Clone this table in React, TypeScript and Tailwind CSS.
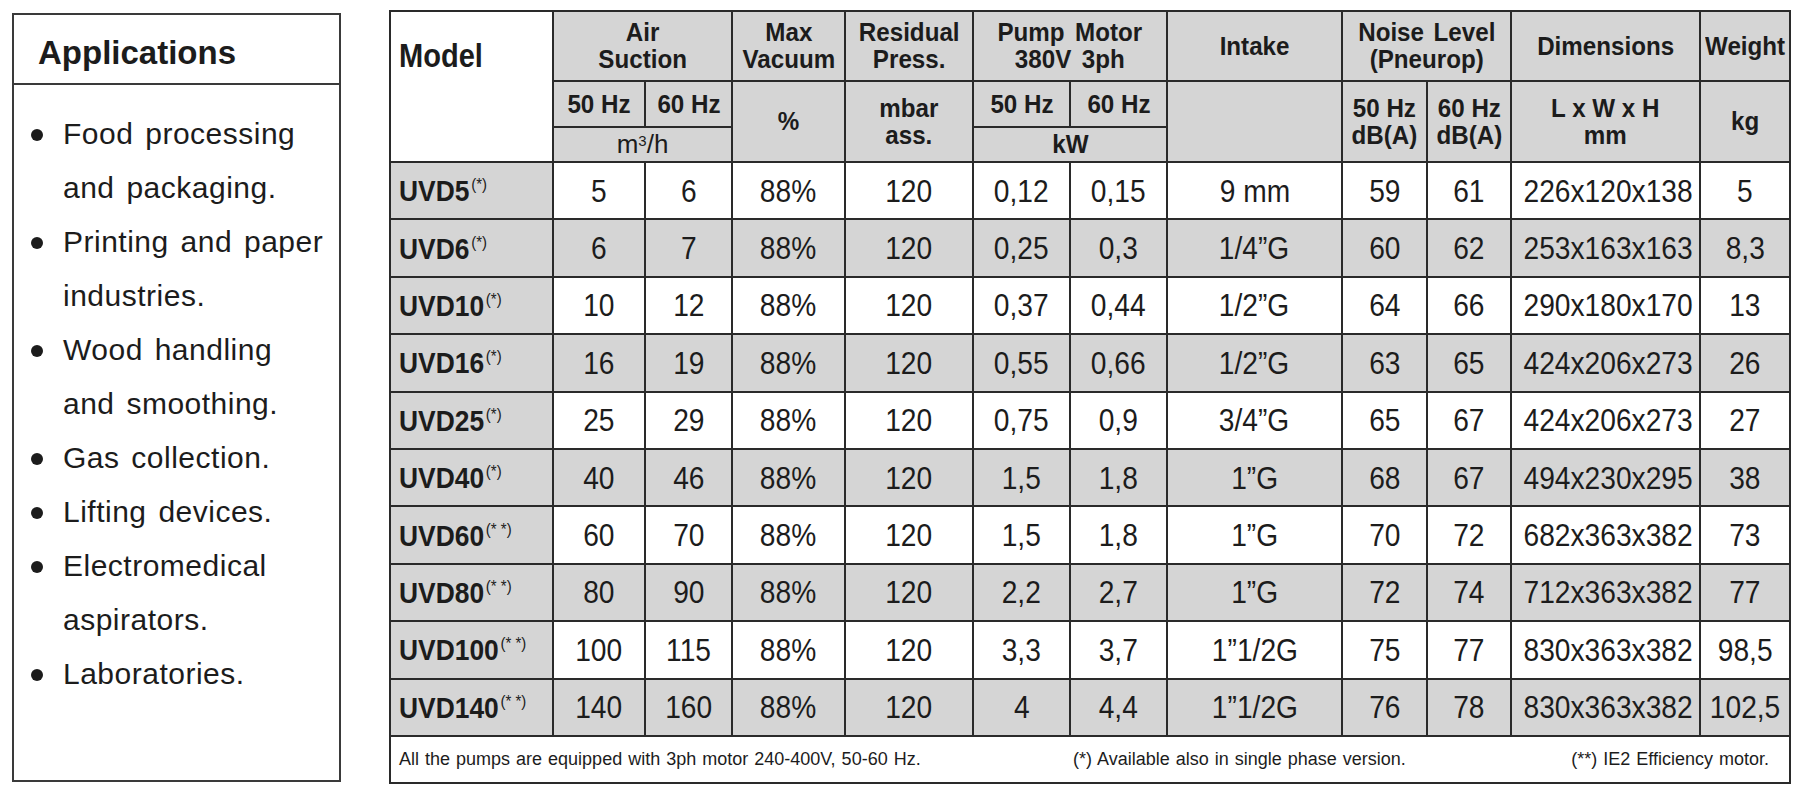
import React from 'react';

const sans = "font-['Liberation_Sans',Arial,sans-serif]";

const rows = [
  ['UVD5', '(*)', '5', '6', '88%', '120', '0,12', '0,15', '9 mm', '59', '61', '226x120x138', '5'],
  ['UVD6', '(*)', '6', '7', '88%', '120', '0,25', '0,3', '1/4”G', '60', '62', '253x163x163', '8,3'],
  ['UVD10', '(*)', '10', '12', '88%', '120', '0,37', '0,44', '1/2”G', '64', '66', '290x180x170', '13'],
  ['UVD16', '(*)', '16', '19', '88%', '120', '0,55', '0,66', '1/2”G', '63', '65', '424x206x273', '26'],
  ['UVD25', '(*)', '25', '29', '88%', '120', '0,75', '0,9', '3/4”G', '65', '67', '424x206x273', '27'],
  ['UVD40', '(*)', '40', '46', '88%', '120', '1,5', '1,8', '1”G', '68', '67', '494x230x295', '38'],
  ['UVD60', '(* *)', '60', '70', '88%', '120', '1,5', '1,8', '1”G', '70', '72', '682x363x382', '73'],
  ['UVD80', '(* *)', '80', '90', '88%', '120', '2,2', '2,7', '1”G', '72', '74', '712x363x382', '77'],
  ['UVD100', '(* *)', '100', '115', '88%', '120', '3,3', '3,7', '1”1/2G', '75', '77', '830x363x382', '98,5'],
  ['UVD140', '(* *)', '140', '160', '88%', '120', '4', '4,4', '1”1/2G', '76', '78', '830x363x382', '102,5'],
];

const applications = [
  ['Food processing', 'and packaging.'],
  ['Printing and paper', 'industries.'],
  ['Wood handling', 'and smoothing.'],
  ['Gas collection.'],
  ['Lifting devices.'],
  ['Electromedical', 'aspirators.'],
  ['Laboratories.'],
];

const cell = 'border-2 border-[#2a2a2a]';
const head = `${cell} bg-[#d5d5d5] text-center font-bold text-[26px] leading-[27px] p-0 whitespace-nowrap`;

// narrow look: the printed sheet uses a condensed Helvetica
function N({ children, left, wide }: { children: React.ReactNode; left?: boolean; wide?: boolean }) {
  return (
    <span className={`inline-block ${wide ? 'scale-x-[0.93]' : 'scale-x-[0.88]'} ${left ? 'origin-left' : 'origin-center'}`}>
      {children}
    </span>
  );
}

export default function App() {
  return (
    <div className={`flex bg-white w-[1800px] h-[792px] text-[#1c1c1c] ${sans}`}>
      <div className="ml-[12px] mt-[13px] w-[329px] h-[769px] border-2 border-[#3a3a3a] flex flex-col">
        <div className="h-[70px] border-b-2 border-[#3a3a3a] flex items-center pl-[24px] pt-[8px] text-[33px] font-bold">
          Applications
        </div>
        <ul className="pt-[22px] text-[30px] leading-[54px] tracking-[0.5px] [word-spacing:3px]">
          {applications.map((item, i) => (
            <li key={i} className="flex">
              <span className="ml-[17px] mt-[22px] w-[12px] h-[12px] rounded-full bg-[#1c1c1c] shrink-0" />
              <span className="ml-[20px]">
                {item.map((line, j) => (
                  <div key={j}>{line}</div>
                ))}
              </span>
            </li>
          ))}
        </ul>
      </div>

      <table className="ml-[48px] mt-[10px] w-[1400px] table-fixed border-collapse self-start">
        <colgroup>
          <col className="w-[163px]" />
          <col className="w-[92px]" />
          <col className="w-[87px]" />
          <col className="w-[113px]" />
          <col className="w-[128px]" />
          <col className="w-[97px]" />
          <col className="w-[97px]" />
          <col className="w-[175px]" />
          <col className="w-[85px]" />
          <col className="w-[84px]" />
          <col className="w-[189px]" />
          <col className="w-[90px]" />
        </colgroup>
        <thead>
          <tr className="h-[70px]">
            <th rowSpan={3} className={`${cell} bg-white align-top text-left pl-[8px] pt-[24px] font-bold text-[33px] leading-[40px]`}>
              <N left>Model</N>
            </th>
            <th colSpan={2} className={head}><N wide>Air<br />Suction</N></th>
            <th className={head}><N wide>Max<br />Vacuum</N></th>
            <th className={head}><N wide>Residual<br />Press.</N></th>
            <th colSpan={2} className={`${head} [word-spacing:4px]`}><N wide>Pump Motor<br />380V 3ph</N></th>
            <th className={head}><N wide>Intake</N></th>
            <th colSpan={2} className={`${head} [word-spacing:3px]`}><N wide>Noise Level<br />(Pneurop)</N></th>
            <th className={head}><N wide>Dimensions</N></th>
            <th className={head}><N wide>Weight</N></th>
          </tr>
          <tr className="h-[46px]">
            <th className={head}><N wide>50 Hz</N></th>
            <th className={head}><N wide>60 Hz</N></th>
            <th rowSpan={2} className={head}><N wide>%</N></th>
            <th rowSpan={2} className={head}><N wide>mbar<br />ass.</N></th>
            <th className={head}><N wide>50 Hz</N></th>
            <th className={head}><N wide>60 Hz</N></th>
            <th rowSpan={2} className={head}></th>
            <th rowSpan={2} className={head}><N wide>50 Hz<br />dB(A)</N></th>
            <th rowSpan={2} className={head}><N wide>60 Hz<br />dB(A)</N></th>
            <th rowSpan={2} className={head}><N wide>L x W x H<br />mm</N></th>
            <th rowSpan={2} className={head}><N wide>kg</N></th>
          </tr>
          <tr className="h-[35px]">
            <th colSpan={2} className={`${head} font-normal text-[24px]`}>
              m<sup className="text-[15px]">3</sup>/h
            </th>
            <th colSpan={2} className={head}><N wide>kW</N></th>
          </tr>
        </thead>
        <tbody>
          {rows.map((r, i) => {
            const shade = i % 2 === 1 ? 'bg-[#d5d5d5]' : 'bg-white';
            return (
              <tr key={r[0]} className="h-[57.4px]">
                <td className={`${cell} bg-[#d5d5d5] pl-[8px] p-0 text-[30px] font-bold whitespace-nowrap`}>
                  <N left>
                    {r[0]}
                    <span className="relative -top-[11px] ml-[2px] text-[17px] font-normal">{r[1]}</span>
                  </N>
                </td>
                {r.slice(2).map((v, j) => (
                  <td key={j} className={`${cell} ${shade} p-0 text-center text-[32px] whitespace-nowrap`}>
                    <N>{v}</N>
                  </td>
                ))}
              </tr>
            );
          })}
          <tr className="h-[47px]">
            <td colSpan={12} className={`${cell} p-0`}>
              <div className="flex items-center pr-[20px] text-[18px] [word-spacing:1px]">
                <span className="w-[682px] pl-[8px] shrink-0">
                  All the pumps are equipped with 3ph motor 240-400V, 50-60 Hz.
                </span>
                <span>(*) Available also in single phase version.</span>
                <span className="ml-auto">(**) IE2 Efficiency motor.</span>
              </div>
            </td>
          </tr>
        </tbody>
      </table>
    </div>
  );
}
